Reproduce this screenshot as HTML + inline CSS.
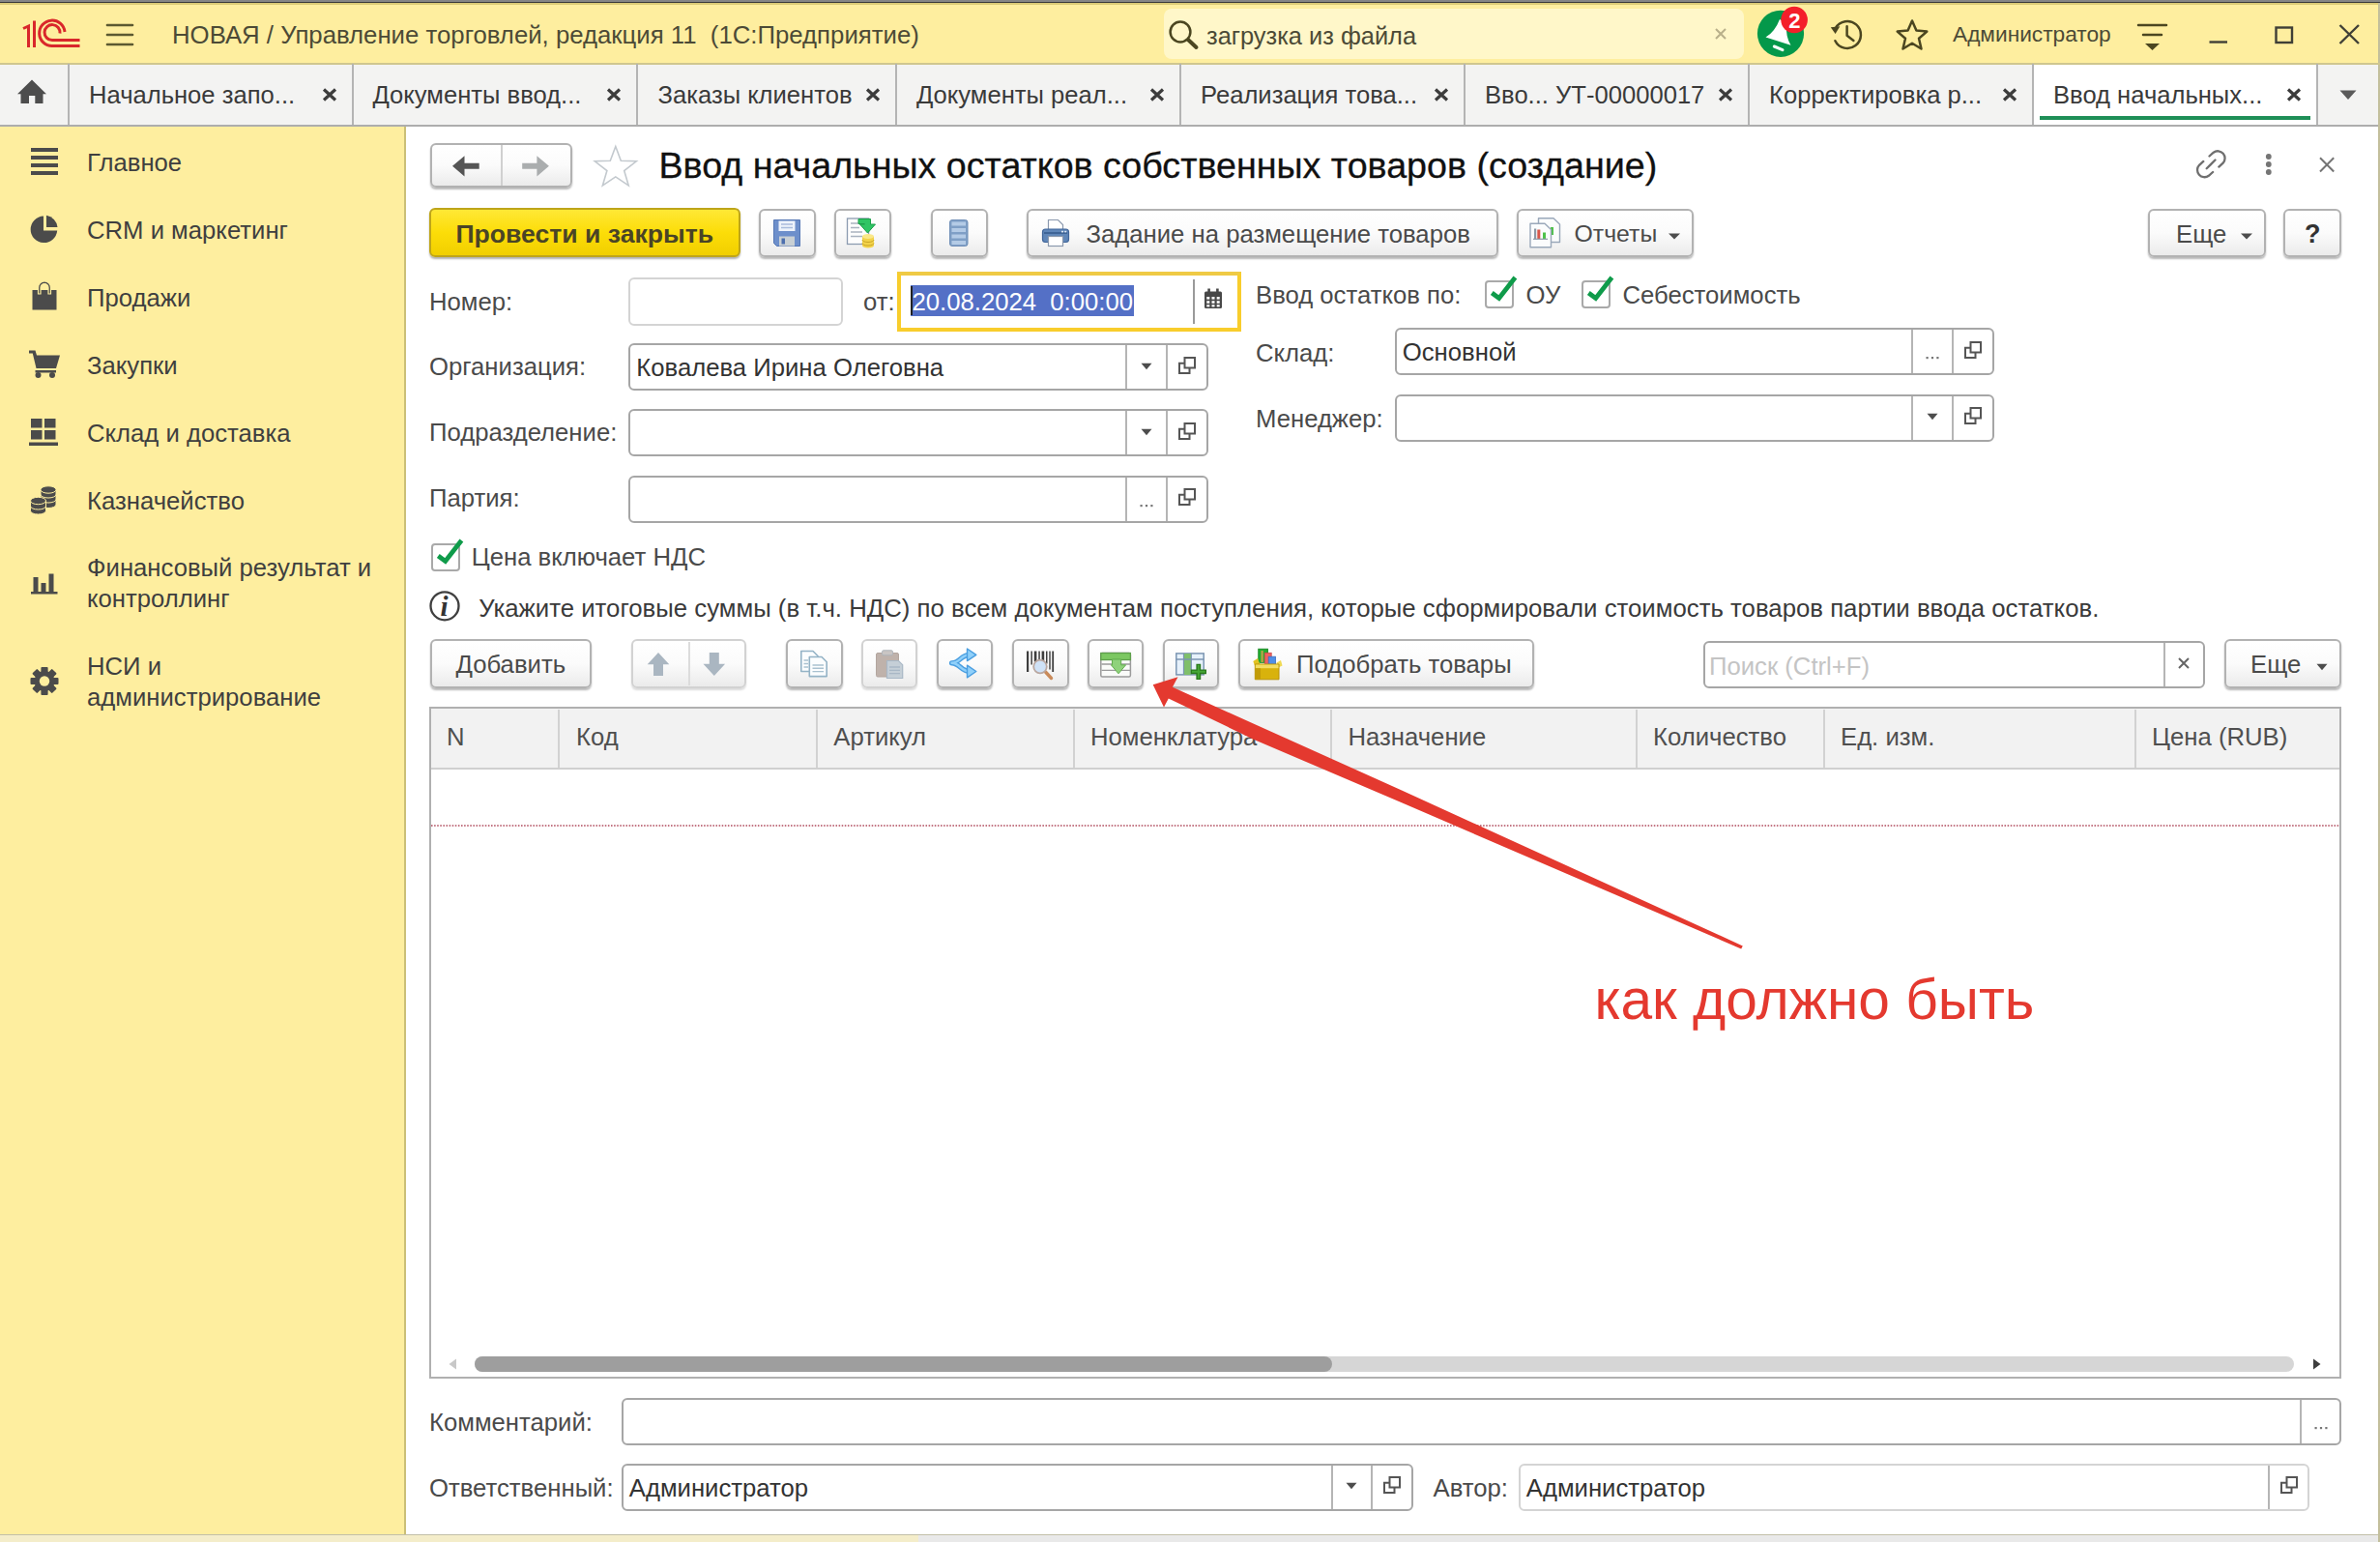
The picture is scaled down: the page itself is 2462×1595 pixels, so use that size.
<!DOCTYPE html>
<html lang="ru">
<head>
<meta charset="utf-8">
<title>Ввод начальных остатков собственных товаров (создание)</title>
<style>
*{box-sizing:border-box;margin:0;padding:0}
html,body{width:2462px;height:1595px;overflow:hidden;background:#fff}
body{position:relative;font-family:"Liberation Sans",Arial,sans-serif;font-size:25.7px;color:#3c3c3c;line-height:1}
.abs,.t,.btn,.fld,.cb{position:absolute}
.t{white-space:nowrap;line-height:30px;height:30px}
#topline{left:0;top:0;width:2462px;height:4.5px;background:linear-gradient(#858585 0 2.2px,#3a3a3a 2.2px 3.1px,#dccb77 3.1px 4.5px)}
#titlebar{left:0;top:3px;width:2462px;height:63px;background:#feee9f}
#tabbar{left:0;top:66px;width:2462px;height:65px;background:#f3f3f2;border-bottom:2px solid #adadad}
#sidebar{left:0;top:131px;width:420px;height:1456px;background:#feee9f;border-right:2px solid #cbbf76}
#rightedge{left:2460.2px;top:3px;width:2px;height:1592px;background:#c3bf9c}
#bottomstrip{left:0;top:1587px;width:2462px;height:8px;background:linear-gradient(90deg,#f4edca 0 950px,#e9e9e9 950px);border-top:1.6px solid #c2bfa8}
.tabsep{position:absolute;top:66px;width:2px;height:63px;background:#b4b4b4}
.tab{position:absolute;top:82px;line-height:32px;height:32px;white-space:nowrap;color:#3a3a3a;font-size:25.6px}
.tx{position:absolute;top:90px;width:16px;height:16px}
.btn{border:2px solid #b2b2b2;border-radius:6px;background:linear-gradient(#ffffff 0%,#fbfbfb 50%,#ebebeb 100%);box-shadow:0 2px 2px rgba(0,0,0,.28)}
.btn .t{color:#4a4a4a}
.fld{border:2px solid #a9a9a9;border-radius:6px;background:#fff}
.fld .sep{position:absolute;top:0;bottom:0;width:2px;background:#b5b5b5}
.cb{width:30px;height:29px;border:2px solid #a9a9a9;border-radius:4px;background:#fff}
.lbl{color:#4a4a4a}
.side{position:absolute;left:90px;color:#3f3f3f;line-height:32px;white-space:nowrap}

</style>
</head>
<body>
<div class="abs" id="titlebar"></div>
<div class="abs" id="topline"></div>
<div class="abs" id="tabbar"></div>
<div class="abs" id="sidebar"></div>
<div class="abs" id="bottomstrip"></div>
<div class="abs" id="rightedge"></div>
<!-- title bar -->
<svg class="abs" style="left:20px;top:16px" width="70" height="38" viewBox="20 16 70 38">
 <g fill="none" stroke="#d9272b" stroke-width="3">
  <path d="M24 29.5 L29.5 27 L29.5 49"/>
  <path d="M35.5 21.5 L35.5 49"/>
  <path d="M67 33 A13.2 13.2 0 1 0 54 47.5 L82.5 47.5"/>
  <path d="M62 34.5 A8 8 0 1 0 54 41.6 L82.5 41.6"/>
 </g>
</svg>
<svg class="abs" style="left:108px;top:22px" width="32" height="28" viewBox="0 0 32 28"><g stroke="#5c5930" stroke-width="2.7" stroke-linecap="round"><path d="M3 4H29M3 14H29M3 24H29"/></g></svg>
<div class="t" style="left:178px;top:20.8px;color:#4c4a36;font-size:25.75px;white-space:pre">НОВАЯ / Управление торговлей, редакция 11  (1С:Предприятие)</div>
<div class="abs" style="left:1204px;top:9px;width:600px;height:52px;border-radius:8px;background:#fff7c9"></div>
<svg class="abs" style="left:1206px;top:18px" width="36" height="36" viewBox="0 0 36 36"><circle cx="15" cy="15" r="10.4" fill="none" stroke="#4b4620" stroke-width="2.5"/><path d="M23.5 23.5L31.5 31" stroke="#4b4620" stroke-width="4" stroke-linecap="round"/></svg>
<div class="t" style="left:1248px;top:21.5px;color:#4c4a36;font-size:25.4px">загрузка из файла</div>
<svg class="abs" style="left:1773px;top:28px" width="14" height="14" viewBox="0 0 14 14"><path d="M2 2L12 12M12 2L2 12" stroke="#b9b08a" stroke-width="2"/></svg>
<!-- bell -->
<svg class="abs" style="left:1812px;top:4px" width="64" height="60" viewBox="1812 4 64 60">
 <circle cx="1842" cy="34.8" r="24.1" fill="#04984a"/>
 <path d="M1826.5 38.6 Q1836 33 1841 20 L1848 24 Q1847 38 1852.5 46.8 Z" fill="#fff"/>
 <path d="M1835.3 48 L1844 51.6" stroke="#fff" stroke-width="3" stroke-linecap="round"/>
 <circle cx="1856.1" cy="20.5" r="13.8" fill="#f41f2a"/>
 <text x="1856.3" y="29.3" font-family="Liberation Sans, Arial, sans-serif" font-size="22" font-weight="bold" fill="#fff" text-anchor="middle">2</text>
</svg>
<!-- history -->
<svg class="abs" style="left:1890px;top:16px" width="42" height="40" viewBox="1890 16 42 40">
 <g fill="none" stroke="#4b4620" stroke-width="2.5" stroke-linecap="round" stroke-linejoin="round">
  <path d="M1898.8 29 A14 14 0 1 1 1898.4 42.2"/>
  <path d="M1910.6 27.3 V36.8 L1917.4 42"/>
 </g>
 <path d="M1893.8 28.2 L1903.3 27.3 L1898.6 35 Z" fill="#4b4620"/>
</svg>
<!-- star -->
<svg class="abs" style="left:1958px;top:16px" width="40" height="40" viewBox="0 0 40 40"><path d="M20 5.5 L24.4 15.6 L35.3 16.6 L27 23.8 L29.5 34.5 L20 28.8 L10.5 34.5 L13 23.8 L4.7 16.6 L15.6 15.6 Z" fill="none" stroke="#4b4620" stroke-width="2.5" stroke-linejoin="round"/></svg>
<div class="t" style="left:2020px;top:19.6px;color:#4c4a36;font-size:22.7px">Администратор</div>
<!-- filter/menu -->
<svg class="abs" style="left:2208px;top:20px" width="36" height="36" viewBox="2208 20 36 36"><g stroke="#4b4620" stroke-width="2.5" stroke-linecap="round"><path d="M2212 26H2241M2217 36H2236"/></g><path d="M2219 45 H2234 L2226.5 52 Z" fill="#4b4620"/></svg>
<!-- window buttons -->
<svg class="abs" style="left:2280px;top:20px" width="170" height="32" viewBox="2280 20 170 32"><g fill="none" stroke="#3f3f36" stroke-width="2.4"><path d="M2285.5 43.5H2304"/><rect x="2354.5" y="28.5" width="16.5" height="15.5"/><path d="M2420.5 26L2440 45M2440 26L2420.5 45"/></g></svg>

<!-- khaki line --><div class="abs" style="left:0;top:65px;width:2462px;height:2px;background:#cfc68f"></div>

<div class="abs" style="left:2104px;top:67px;width:293px;height:62px;background:#fff"></div>
<div class="abs" style="left:2110px;top:120px;width:280px;height:4px;background:#1f8f57"></div>
<div class="tabsep" style="left:70px"></div>
<div class="tabsep" style="left:364px"></div>
<div class="tabsep" style="left:658px"></div>
<div class="tabsep" style="left:926px"></div>
<div class="tabsep" style="left:1220px"></div>
<div class="tabsep" style="left:1514px"></div>
<div class="tabsep" style="left:1808px"></div>
<div class="tabsep" style="left:2102px"></div>
<div class="tabsep" style="left:2396px"></div>
<svg class="abs" style="left:16px;top:80px" width="34" height="30" viewBox="16 80 34 30"><path d="M33 82.5 L48 97.2 H44.5 V107 H36.3 V99 H30 V107 H21.5 V97.2 H18 Z" fill="#4d4d4d"/></svg>
<div class="tab" style="left:92px">Начальное запо...</div>
<svg class="tx" style="left:333px" viewBox="0 0 16 16"><path d="M2 2.5L14 13.5M14 2.5L2 13.5" stroke="#3c3c3c" stroke-width="3.2"/></svg>
<div class="tab" style="left:385.5px">Документы ввод...</div>
<svg class="tx" style="left:627px" viewBox="0 0 16 16"><path d="M2 2.5L14 13.5M14 2.5L2 13.5" stroke="#3c3c3c" stroke-width="3.2"/></svg>
<div class="tab" style="left:680.5px">Заказы клиентов</div>
<svg class="tx" style="left:895px" viewBox="0 0 16 16"><path d="M2 2.5L14 13.5M14 2.5L2 13.5" stroke="#3c3c3c" stroke-width="3.2"/></svg>
<div class="tab" style="left:948px">Документы реал...</div>
<svg class="tx" style="left:1189px" viewBox="0 0 16 16"><path d="M2 2.5L14 13.5M14 2.5L2 13.5" stroke="#3c3c3c" stroke-width="3.2"/></svg>
<div class="tab" style="left:1242px">Реализация това...</div>
<svg class="tx" style="left:1483px" viewBox="0 0 16 16"><path d="M2 2.5L14 13.5M14 2.5L2 13.5" stroke="#3c3c3c" stroke-width="3.2"/></svg>
<div class="tab" style="left:1536px">Вво... УТ-00000017</div>
<svg class="tx" style="left:1777px" viewBox="0 0 16 16"><path d="M2 2.5L14 13.5M14 2.5L2 13.5" stroke="#3c3c3c" stroke-width="3.2"/></svg>
<div class="tab" style="left:1830px">Корректировка р...</div>
<svg class="tx" style="left:2071px" viewBox="0 0 16 16"><path d="M2 2.5L14 13.5M14 2.5L2 13.5" stroke="#3c3c3c" stroke-width="3.2"/></svg>
<div class="tab" style="left:2124px">Ввод начальных...</div>
<svg class="tx" style="left:2365px" viewBox="0 0 16 16"><path d="M2 2.5L14 13.5M14 2.5L2 13.5" stroke="#3c3c3c" stroke-width="3.2"/></svg>
<svg class="abs" style="left:2419px;top:92px" width="20" height="12" viewBox="0 0 20 12"><path d="M1.5 1.5H18.5L10 11Z" fill="#5a5a5a"/></svg>
<!-- sidebar -->
<svg class="abs" style="left:0;top:130px" width="100" height="620" viewBox="0 130 100 620">
 <g fill="#4b4b4b">
  <!-- main: 4 bars -->
  <rect x="32" y="153" width="28" height="4"/><rect x="32" y="161" width="28" height="4"/><rect x="32" y="169" width="28" height="4"/><rect x="32" y="177" width="28" height="4"/>
  <!-- crm pie -->
  <path d="M45 223.5 A13.8 13.8 0 1 0 59.2 238.5 H45 Z"/>
  <path d="M48 222.8 A13.8 13.8 0 0 1 59.5 235 H48 Z"/>
  <!-- sales bag -->
  <path d="M33.5 300 H58.5 V320.5 H33.5 Z"/>
  <path d="M39.5 304 V297.5 A6.5 6.5 0 0 1 52.5 297.5 V304 H50 V297.5 A4 4 0 0 0 42 297.5 V304 Z" fill="#4b4b4b" stroke="#feee9f" stroke-width="1.2"/>
  <!-- cart -->
  <path d="M30 362.5 H36.5 L38 367.5 H62 L58 381 H37.5 L33.8 365.5 H30 Z"/>
  <path d="M36.5 383 H58 V385.5 H36.5 Z"/>
  <circle cx="39.5" cy="388" r="3"/><circle cx="54" cy="388" r="3"/>
  <!-- warehouse -->
  <rect x="32" y="433" width="11.5" height="9.5"/><rect x="46" y="433" width="11.5" height="9.5"/>
  <rect x="32" y="445" width="11.5" height="9.5"/><rect x="46" y="445" width="11.5" height="9.5"/>
  <rect x="30" y="457.5" width="30" height="3.5"/>
  <!-- bars chart -->
  <rect x="34.5" y="597" width="5" height="15"/><rect x="42.5" y="603" width="5" height="9"/><rect x="50.5" y="593.5" width="5" height="18.5"/>
  <rect x="32" y="612" width="27.5" height="2.5"/>
 </g>
 <!-- coins -->
 <g fill="#4b4b4b" stroke="#feee9f" stroke-width="1">
  <path d="M42 506 V522 A8 3.5 0 0 0 58 522 V506 Z"/>
  <ellipse cx="50" cy="506.5" rx="8" ry="3.7"/>
  <path d="M42 511.5 A8 3.5 0 0 0 58 511.5 M42 516.5 A8 3.5 0 0 0 58 516.5" fill="none"/>
  <path d="M31.5 518 V528.5 A8 3.5 0 0 0 47.5 528.5 V518 Z"/>
  <ellipse cx="39.5" cy="518" rx="8" ry="3.7"/>
  <path d="M31.5 523.5 A8 3.5 0 0 0 47.5 523.5" fill="none"/>
 </g>
 <!-- gear -->
 <g transform="translate(46 704.5)">
  <g fill="#4b4b4b">
   <rect x="-3.6" y="-14.5" width="7.2" height="29" rx="1"/>
   <rect x="-3.6" y="-14.5" width="7.2" height="29" rx="1" transform="rotate(45)"/>
   <rect x="-3.6" y="-14.5" width="7.2" height="29" rx="1" transform="rotate(90)"/>
   <rect x="-3.6" y="-14.5" width="7.2" height="29" rx="1" transform="rotate(135)"/>
   <circle r="10.5"/>
  </g>
  <circle r="5.2" fill="#feee9f"/>
 </g>
</svg>
<div class="side" style="top:152px">Главное</div>
<div class="side" style="top:222px">CRM и маркетинг</div>
<div class="side" style="top:291.5px">Продажи</div>
<div class="side" style="top:362px">Закупки</div>
<div class="side" style="top:431.5px">Склад и доставка</div>
<div class="side" style="top:501.5px">Казначейство</div>
<div class="side" style="top:571px">Финансовый результат и<br>контроллинг</div>
<div class="side" style="top:673px">НСИ и<br>администрирование</div>

<!-- header: nav, star, title -->
<div class="btn" style="left:445px;top:148px;width:147px;height:46px"></div>
<div class="abs" style="left:518px;top:150px;width:2px;height:42px;background:#d0d0d0"></div>
<svg class="abs" style="left:464px;top:158px" width="110" height="28" viewBox="464 158 110 28">
 <path d="M468 171.8 L480.5 161.2 V168.8 H495.7 V174.8 H480.5 V182.4 Z" fill="#555"/>
 <path d="M567.9 171.8 L555.4 161.2 V168.8 H540.2 V174.8 H555.4 V182.4 Z" fill="#aaadae"/>
</svg>
<svg class="abs" style="left:610px;top:146px" width="54" height="50" viewBox="610 146 54 50"><path d="M636.8 151.5 L642.3 166.3 L658.3 166.8 L645.7 176.6 L650.2 191.8 L636.8 182.9 L623.4 191.8 L627.9 176.6 L615.3 166.8 L631.3 166.3 Z" fill="#fff" stroke="#c3c9ce" stroke-width="1.6" stroke-linejoin="miter"/></svg>
<div class="t" style="left:681.5px;top:149px;height:44px;line-height:44px;font-size:37.65px;color:#111;-webkit-text-stroke:0.3px #111">Ввод начальных остатков собственных товаров (создание)</div>
<!-- link, dots, close -->
<svg class="abs" style="left:2266px;top:150px" width="160" height="40" viewBox="2266 150 160 40">
 <g fill="none" stroke="#6f6f6f" stroke-width="2.3" stroke-linecap="round">
  <path d="M2285.5 161.5 L2289.8 157.7 A7.4 7.4 0 0 1 2299.6 168.7 L2295.3 172.6"/>
  <path d="M2279.3 166.9 L2275 170.8 A7.4 7.4 0 0 0 2284.8 181.8 L2289.1 178"/>
  <path d="M2282.7 174.3 L2291.5 165.5"/>
 </g>
 <g fill="#757575"><circle cx="2346.8" cy="162" r="2.9"/><circle cx="2346.8" cy="170" r="2.9"/><circle cx="2346.8" cy="178" r="2.9"/></g>
 <path d="M2400 163.3 L2414.2 177.5 M2414.2 163.3 L2400 177.5" stroke="#747474" stroke-width="2"/>
</svg>
<!-- command bar -->
<div class="abs" style="left:444px;top:215px;width:322px;height:51px;border:2px solid #bea51a;border-radius:6px;background:linear-gradient(#ffe836 0%,#fcdd08 50%,#f1cf00 100%);box-shadow:0 2px 2px rgba(0,0,0,.3)"></div>
<div class="t" style="left:471.5px;top:227px;font-weight:bold;font-size:26.6px;color:#4a4426">Провести и закрыть</div>
<div class="btn" style="left:785px;top:215.5px;width:59px;height:50px"></div>
<div class="btn" style="left:863px;top:215.5px;width:59px;height:50px"></div>
<div class="btn" style="left:963px;top:215.5px;width:59px;height:50px"></div>
<div class="btn" style="left:1062px;top:215.5px;width:488px;height:50px"><div class="t" style="left:59.5px;top:9.6px">Задание на размещение товаров</div></div>
<div class="btn" style="left:1569px;top:215.5px;width:183px;height:50px"><div class="t" style="left:57.5px;top:9.6px;font-size:24.8px">Отчеты</div></div>
<div class="btn" style="left:2222px;top:215.5px;width:122px;height:50px"><div class="t" style="left:27px;top:9.6px">Еще</div></div>
<div class="btn" style="left:2362px;top:215.5px;width:60px;height:50px"><div class="t" style="left:20px;top:9.6px;font-weight:bold;font-size:27px;color:#333">?</div></div>
<svg class="abs" style="left:1723.8px;top:238.2px" width="16" height="12" viewBox="0 0 16 12"><path d="M2 3.5H14L8 9.5Z" fill="#4d4d4d"/></svg>
<svg class="abs" style="left:2316px;top:238px" width="16" height="12" viewBox="0 0 16 12"><path d="M2 3.5H14L8 9.5Z" fill="#4d4d4d"/></svg>
<!-- save icon -->
<svg class="abs" style="left:798px;top:224px" width="34" height="34" viewBox="798 224 34 34">
 <path d="M800.5 227.5 H827.5 V254.5 H803.5 L800.5 251.5 Z" fill="#6d8fcb" stroke="#5577b5" stroke-width="1"/>
 <rect x="805.5" y="228.5" width="17" height="10.5" fill="#eef3fb"/>
 <path d="M808 232H820M808 235.5H820" stroke="#a9bbdc" stroke-width="1.3"/>
 <rect x="806" y="244.5" width="16" height="10" fill="#c9d0d4"/>
 <rect x="808.5" y="246.5" width="3.5" height="6" fill="#4d6fae"/>
</svg>
<!-- post (doc + green arrow + db) -->
<svg class="abs" style="left:872px;top:222px" width="40" height="38" viewBox="872 222 40 38">
 <rect x="876.5" y="226" width="22" height="26.5" fill="#fdfdfd" stroke="#8c9bb0" stroke-width="1.3"/>
 <path d="M880 231H889M880 235.5H889M880 240H892M880 244.5H892" stroke="#a9b2bf" stroke-width="1.5"/>
 <path d="M888 226.5 H900.5 V232 H905.5 L897.5 241 L889.5 232 H894.5 V231.5 H888 Z" fill="#2fc564" stroke="#1da04b" stroke-width="1"/>
 <path d="M892 244.5 V254 A6 2.5 0 0 0 904 254 V244.5 Z" fill="#f3d34a"/>
 <ellipse cx="898" cy="244.5" rx="6" ry="2.5" fill="#fae88a"/>
 <path d="M892 248 A6 2.5 0 0 0 904 248 M892 251.5 A6 2.5 0 0 0 904 251.5" fill="none" stroke="#c9a528" stroke-width="1"/>
</svg>
<!-- list icon -->
<svg class="abs" style="left:978px;top:224px" width="28" height="34" viewBox="978 224 28 34">
 <rect x="982.5" y="227.5" width="18.5" height="27" rx="2.5" fill="#7f9fc6" stroke="#7190b8" stroke-width="1"/>
 <g fill="#b4cbe6"><rect x="984.5" y="229.5" width="14.5" height="4"/><rect x="984.5" y="236" width="14.5" height="4"/><rect x="984.5" y="242.5" width="14.5" height="4"/><rect x="984.5" y="249" width="14.5" height="4"/></g>
</svg>
<!-- printer -->
<svg class="abs" style="left:1074px;top:224px" width="36" height="34" viewBox="1074 224 36 34">
 <path d="M1084.5 238 V227.5 H1094.5 L1099.5 232.5 V238 Z" fill="#fff" stroke="#8a98ad" stroke-width="1.2"/>
 <rect x="1078.5" y="237" width="27" height="13.5" rx="3" fill="#5f86b8" stroke="#41669a" stroke-width="1.2"/>
 <path d="M1080 241H1104" stroke="#355a8c" stroke-width="1.5"/>
 <rect x="1098" y="238.8" width="2" height="1.6" fill="#dfe8f4"/><rect x="1101.2" y="238.8" width="2" height="1.6" fill="#dfe8f4"/>
 <rect x="1084.5" y="244.5" width="15" height="10" fill="#fff" stroke="#8a98ad" stroke-width="1.2"/>
</svg>
<!-- reports icon -->
<svg class="abs" style="left:1578px;top:222px" width="40" height="38" viewBox="1578 222 40 38">
 <path d="M1591.5 225.8 H1607 L1613.5 232 V250.5 H1591.5 Z" fill="#fbfcfd" stroke="#9aa8ba" stroke-width="1.4" stroke-linejoin="round"/>
 <rect x="1604" y="235" width="3" height="8" fill="#4ec24a"/>
 <path d="M1583 231.3 H1598 L1604.5 237.5 V255.8 H1583 Z" fill="#fbfcfd" stroke="#9aa8ba" stroke-width="1.4" stroke-linejoin="round"/>
 <rect x="1587" y="236.5" width="2.2" height="10.5" fill="#8d99a6"/>
 <rect x="1590.3" y="237.5" width="3" height="9.5" fill="#d8574a"/>
 <rect x="1596" y="240.5" width="3" height="6.5" fill="#4ec24a"/>
 <path d="M1586 247.3H1601" stroke="#8d99a6" stroke-width="1.2"/>
</svg>

<div class="t lbl" style="left:444px;top:297.3px;">Номер:</div>
<div class="fld" style="left:650px;top:287.3px;width:221.5px;height:49.5px;border-color:#d4d4d4">
</div>
<div class="t lbl" style="left:893px;top:297.3px;">от:</div>
<div class="abs" style="left:928px;top:281px;width:356px;height:62px;border:4px solid #f8cd2c;border-top-color:#efca45;background:#fff"></div>
<div class="abs" style="left:942px;top:295px;width:230.5px;height:32px;background:#5470c6"></div>
<div class="abs" style="left:942px;top:296px;width:2px;height:30px;background:#222"></div>
<div class="t " style="left:943.5px;top:297.3px;color:#fff;white-space:pre">20.08.2024  0:00:00</div>
<div class="abs" style="left:1233.5px;top:289px;width:2px;height:46px;background:#9a9a9a"></div>
<svg class="abs" style="left:1244px;top:296px" width="22" height="26" viewBox="1244 296 22 26">
<rect x="1246" y="301.5" width="18" height="17.5" rx="1.5" fill="#484848"/>
<rect x="1249.3" y="298.5" width="2.6" height="5" fill="#484848"/><rect x="1258.1" y="298.5" width="2.6" height="5" fill="#484848"/>
<g fill="#fff"><rect x="1248.3" y="307" width="3" height="2.6"/><rect x="1253.5" y="307" width="3" height="2.6"/><rect x="1258.7" y="307" width="3" height="2.6"/>
<rect x="1248.3" y="311.2" width="3" height="2.6"/><rect x="1253.5" y="311.2" width="3" height="2.6"/><rect x="1258.7" y="311.2" width="3" height="2.6"/>
<rect x="1248.3" y="315.2" width="3" height="2.2"/><rect x="1253.5" y="315.2" width="3" height="2.2"/><rect x="1258.7" y="315.2" width="3" height="2.2"/></g></svg>
<div class="t lbl" style="left:444px;top:364.4px;">Организация:</div>
<div class="fld" style="left:650px;top:355px;width:600px;height:49.2px;border-color:#a6a6a6">
<div class="sep" style="left:512.4000000000001px"></div>
<div class="sep" style="left:554px"></div>
</div>
<div class="t " style="left:658.3px;top:365.2px;color:#333">Ковалева Ирина Олеговна</div>
<svg class="abs" style="left:1178.2px;top:372.5px" width="16" height="12" viewBox="0 0 16 12"><path d="M2.5 2.8H13.5L8 9.3Z" fill="#4d4d4d"/></svg>
<svg class="abs" style="left:1218.2px;top:367.5px" width="20" height="20" viewBox="-1 -1 20 20"><g fill="none" stroke="#555" stroke-width="2"><path d="M6.5 1 H17 V11.5 H6.5 Z"/><path d="M6 6.8 H1 V17 H11.5 V12"/></g></svg>
<div class="t lbl" style="left:444px;top:432.4px;">Подразделение:</div>
<div class="fld" style="left:650px;top:423px;width:600px;height:49.2px;border-color:#a6a6a6">
<div class="sep" style="left:512.4000000000001px"></div>
<div class="sep" style="left:554px"></div>
</div>
<svg class="abs" style="left:1178.2px;top:440.5px" width="16" height="12" viewBox="0 0 16 12"><path d="M2.5 2.8H13.5L8 9.3Z" fill="#4d4d4d"/></svg>
<svg class="abs" style="left:1218.2px;top:435.5px" width="20" height="20" viewBox="-1 -1 20 20"><g fill="none" stroke="#555" stroke-width="2"><path d="M6.5 1 H17 V11.5 H6.5 Z"/><path d="M6 6.8 H1 V17 H11.5 V12"/></g></svg>
<div class="t lbl" style="left:444px;top:500.4px;">Партия:</div>
<div class="fld" style="left:650px;top:491.5px;width:600px;height:49.2px;border-color:#a6a6a6">
<div class="sep" style="left:512.4000000000001px"></div>
<div class="sep" style="left:554px"></div>
</div>
<svg class="abs" style="left:1178.2px;top:520.5px" width="16" height="4" viewBox="0 0 16 4"><g fill="#777"><rect x="1.5" y="1" width="2.2" height="2.2"/><rect x="6.9" y="1" width="2.2" height="2.2"/><rect x="12.3" y="1" width="2.2" height="2.2"/></g></svg>
<svg class="abs" style="left:1218.2px;top:504.0px" width="20" height="20" viewBox="-1 -1 20 20"><g fill="none" stroke="#555" stroke-width="2"><path d="M6.5 1 H17 V11.5 H6.5 Z"/><path d="M6 6.8 H1 V17 H11.5 V12"/></g></svg>
<div class="t lbl" style="left:1299px;top:289.5px;">Ввод остатков по:</div>
<div class="cb" style="left:1536px;top:289.5px"></div><svg class="abs" style="left:1536px;top:280.8px" width="40" height="40" viewBox="0 0 40 40"><path d="M7.3 22 L14.7 27.4 L31.4 6" fill="none" stroke="#0f9b4a" stroke-width="4.8" stroke-linejoin="miter"/></svg>
<div class="t lbl" style="left:1578.5px;top:289.5px;">ОУ</div>
<div class="cb" style="left:1636px;top:289.5px"></div><svg class="abs" style="left:1636px;top:280.8px" width="40" height="40" viewBox="0 0 40 40"><path d="M7.3 22 L14.7 27.4 L31.4 6" fill="none" stroke="#0f9b4a" stroke-width="4.8" stroke-linejoin="miter"/></svg>
<div class="t lbl" style="left:1678.5px;top:289.5px;">Себестоимость</div>
<div class="t lbl" style="left:1299px;top:349.6px;">Склад:</div>
<div class="fld" style="left:1442.5px;top:339.2px;width:620px;height:49.2px;border-color:#a6a6a6">
<div class="sep" style="left:532.5px"></div>
<div class="sep" style="left:574.5px"></div>
</div>
<div class="t " style="left:1450.8px;top:349.4px;color:#333">Основной</div>
<svg class="abs" style="left:1991.0px;top:368.2px" width="16" height="4" viewBox="0 0 16 4"><g fill="#777"><rect x="1.5" y="1" width="2.2" height="2.2"/><rect x="6.9" y="1" width="2.2" height="2.2"/><rect x="12.3" y="1" width="2.2" height="2.2"/></g></svg>
<svg class="abs" style="left:2030.95px;top:351.7px" width="20" height="20" viewBox="-1 -1 20 20"><g fill="none" stroke="#555" stroke-width="2"><path d="M6.5 1 H17 V11.5 H6.5 Z"/><path d="M6 6.8 H1 V17 H11.5 V12"/></g></svg>
<div class="t lbl" style="left:1299px;top:418.0px;">Менеджер:</div>
<div class="fld" style="left:1442.5px;top:407.5px;width:620px;height:49.2px;border-color:#a6a6a6">
<div class="sep" style="left:532.5px"></div>
<div class="sep" style="left:574.5px"></div>
</div>
<svg class="abs" style="left:1991.0px;top:425.0px" width="16" height="12" viewBox="0 0 16 12"><path d="M2.5 2.8H13.5L8 9.3Z" fill="#4d4d4d"/></svg>
<svg class="abs" style="left:2030.95px;top:420.0px" width="20" height="20" viewBox="-1 -1 20 20"><g fill="none" stroke="#555" stroke-width="2"><path d="M6.5 1 H17 V11.5 H6.5 Z"/><path d="M6 6.8 H1 V17 H11.5 V12"/></g></svg>
<div class="cb" style="left:446px;top:561.5px"></div><svg class="abs" style="left:446px;top:552.8px" width="40" height="40" viewBox="0 0 40 40"><path d="M7.3 22 L14.7 27.4 L31.4 6" fill="none" stroke="#0f9b4a" stroke-width="4.8" stroke-linejoin="miter"/></svg>
<div class="t lbl" style="left:487.7px;top:561.0px;">Цена включает НДС</div>
<svg class="abs" style="left:442px;top:609px" width="36" height="36" viewBox="442 609 36 36"><circle cx="460" cy="626.8" r="14.5" fill="#fff" stroke="#3f3f3f" stroke-width="2.3"/>
<text x="459.6" y="636.6" font-family="Liberation Serif, serif" font-style="italic" font-weight="bold" font-size="29" text-anchor="middle" fill="#333">i</text></svg>
<div class="t " style="left:495.2px;top:613.6px;color:#3a3a3a;font-size:25.78px">Укажите итоговые суммы (в т.ч. НДС) по всем документам поступления, которые сформировали стоимость товаров партии ввода остатков.</div>
<div class="btn" style="left:444.5px;top:661.2px;width:167px;height:51.3px"><div class="t" style="left:25px;top:8.9px">Добавить</div></div>
<div class="btn" style="left:653px;top:661.2px;width:118.5px;height:51.3px;border-color:#d2d2d2;box-shadow:0 2px 2px rgba(0,0,0,.14)"></div>
<div class="abs" style="left:711.6px;top:664px;width:2px;height:45px;background:#dcdcdc"></div>
<svg class="abs" style="left:666px;top:670px" width="90" height="34" viewBox="666 670 90 34">
<path d="M681 675 L692.3 687.3 H686 V699 H676 V687.3 H669.7 Z" fill="#aab6c1"/>
<path d="M738.8 699 L750.1 686.7 H743.8 V675 H733.8 V686.7 H727.5 Z" fill="#aab6c1"/></svg>
<div class="btn" style="left:813px;top:661.2px;width:58.5px;height:51.3px"></div>
<div class="btn" style="left:890.5px;top:661.2px;width:58.5px;height:51.3px;border-color:#d2d2d2;box-shadow:0 2px 2px rgba(0,0,0,.14)"></div>
<div class="btn" style="left:968.5px;top:661.2px;width:58.5px;height:51.3px"></div>
<div class="btn" style="left:1047px;top:661.2px;width:58.5px;height:51.3px"></div>
<div class="btn" style="left:1124.5px;top:661.2px;width:58.5px;height:51.3px"></div>
<div class="btn" style="left:1202.5px;top:661.2px;width:58.5px;height:51.3px"></div>
<div class="btn" style="left:1280.5px;top:661.2px;width:306.5px;height:51.3px"><div class="t" style="left:58.5px;top:8.9px">Подобрать товары</div></div>
<svg class="abs" style="left:824px;top:668px" width="36" height="36" viewBox="824 668 36 36">
<g fill="#fbfdfe" stroke="#94b3c6" stroke-width="1.6" stroke-linejoin="round">
<path d="M828.8 673.5 H841 L846 678.5 V694.5 H828.8 Z"/>
<path d="M837.3 679.5 H850 L855.2 684.7 V699.6 H837.3 Z"/></g>
<g stroke="#a9c1d0" stroke-width="1.4"><path d="M831.5 683H836M831.5 686.5H836M831.5 690H836"/><path d="M840.5 688H852M840.5 691.3H852M840.5 694.6H852"/></g>
</svg>
<svg class="abs" style="left:902px;top:668px" width="36" height="38" viewBox="902 668 36 38">
<rect x="906.5" y="675.5" width="23" height="24.5" rx="1.5" fill="#bfb2ab" stroke="#b3a69f" stroke-width="1"/>
<rect x="912.5" y="672.8" width="11" height="5" rx="1.5" fill="#c9c5c3" stroke="#aeb4ba" stroke-width="1"/>
<path d="M917.5 683.5 H929.5 L933.7 687.7 V701.5 H917.5 Z" fill="#c5cfd7" stroke="#a9b8c6" stroke-width="1.2"/>
<path d="M920 690H931M920 693.3H931M920 696.6H931" stroke="#a9b8c6" stroke-width="1.3"/>
</svg>
<svg class="abs" style="left:978px;top:666px" width="38" height="40" viewBox="978 666 38 40">
<g fill="none" stroke="#4a9ee0" stroke-width="5.2" stroke-linejoin="round"><path d="M1003 677.3 C994 677.3 993 685.8 984.5 685.8 C993 685.8 994 694.5 1003 694.5"/></g>
<g fill="none" stroke="#8fd0fa" stroke-width="2.4" stroke-linejoin="round"><path d="M1003 677.3 C994 677.3 993 685.8 984.5 685.8 C993 685.8 994 694.5 1003 694.5"/></g>
<path d="M1000.5 671 L1009.8 677.3 L1000.5 683.6 Z" fill="#8fd0fa" stroke="#4a9ee0" stroke-width="1.4" stroke-linejoin="round"/>
<path d="M1000.5 688.2 L1009.8 694.5 L1000.5 700.8 Z" fill="#8fd0fa" stroke="#4a9ee0" stroke-width="1.4" stroke-linejoin="round"/>
</svg>
<svg class="abs" style="left:1058px;top:668px" width="38" height="38" viewBox="1058 668 38 38">
<g fill="#3e3e3e"><rect x="1062" y="673.5" width="2.2" height="21.5"/><rect x="1066.4" y="673.5" width="1.5" height="14"/><rect x="1069.8" y="673.5" width="2.6" height="11"/><rect x="1074.3" y="673.5" width="1.5" height="10"/><rect x="1077.6" y="673.5" width="2.6" height="11"/><rect x="1082" y="673.5" width="1.5" height="13"/><rect x="1085.3" y="673.5" width="1.4" height="19"/><rect x="1088.3" y="673.5" width="1.8" height="21.5"/></g>
<path d="M1081.5 695 L1087.5 701.5" stroke="#c98a5a" stroke-width="3.4" stroke-linecap="round"/>
<circle cx="1076" cy="689.5" r="6.8" fill="#cfe2f7" stroke="#b9a7a0" stroke-width="1.8"/>
</svg>
<svg class="abs" style="left:1134px;top:670px" width="40" height="36" viewBox="1134 670 40 36">
<rect x="1138.8" y="675.5" width="30.6" height="24.6" rx="1.5" fill="#fafbf9" stroke="#9b9b9b" stroke-width="1.5"/>
<path d="M1139.5 687H1169M1139.5 693.4H1169" stroke="#9b9b9b" stroke-width="1.4"/>
<rect x="1138.8" y="675.5" width="30.6" height="7" fill="#7cc862" stroke="#5e9f4b" stroke-width="1.3"/>
<path d="M1150.5 682 H1159.7 V687.8 H1164.6 L1157 696.8 L1149.4 687.8 H1150.5 Z" fill="#8fd27b" stroke="#63ad4e" stroke-width="1"/>
</svg>
<svg class="abs" style="left:1212px;top:670px" width="40" height="36" viewBox="1212 670 40 36">
<rect x="1216.8" y="675.9" width="28.4" height="22" fill="#e6f1fb" stroke="#7b95b2" stroke-width="1.5"/>
<rect x="1224.5" y="676" width="7.8" height="22" fill="#7fbf6a"/>
<path d="M1224.5 676V698M1232.3 676V698" stroke="#7b95b2" stroke-width="1.2"/>
<path d="M1216.8 682H1245.2" stroke="#7b95b2" stroke-width="1.5"/>
<path d="M1239.8 686.8 V703 M1231.8 694.8 H1248" stroke="#2a7a1c" stroke-width="4.8"/>
<path d="M1239.8 688 V701.8 M1233 694.8 H1246.8" stroke="#46a636" stroke-width="2"/>
</svg>
<svg class="abs" style="left:1292px;top:666px" width="38" height="40" viewBox="1292 666 38 40">
<rect x="1301.8" y="671.3" width="9.6" height="14" fill="#22b02e" stroke="#1d8a27" stroke-width="1"/>
<rect x="1304.5" y="673" width="2.2" height="12" fill="#bfa24a"/>
<rect x="1308.2" y="675.3" width="7" height="11" fill="#f0635f" stroke="#c9484a" stroke-width="0.8"/>
<rect x="1312.2" y="679.2" width="7.3" height="8" fill="#4f8fe6" stroke="#3a6fc0" stroke-width="0.8"/>
<path d="M1296.3 684 L1301 681 L1303.5 687.5 L1298.5 690 Z" fill="#e2c322"/>
<path d="M1320.5 685.5 L1325 683 L1326.5 688.5 L1322.5 690.5 Z" fill="#f0da55"/>
<path d="M1298.3 687 H1323 V702.8 H1298.3 Z" fill="#d8b20c" stroke="#b8930a" stroke-width="1"/>
<path d="M1298.8 687.5 H1322.5 V691.2 H1298.8 Z" fill="#f2dd63"/>
<path d="M1298.8 691.2 H1304 V702.3 H1298.8 Z" fill="#c29c08"/>
</svg>
<div class="fld" style="left:1762.3px;top:662.8px;width:519px;height:49.3px;border-color:#a6a6a6">
<div class="sep" style="left:473.5000000000002px"></div>
</div>
<div class="t " style="left:1768px;top:674.3px;color:#c4c4c4">Поиск (Ctrl+F)</div>
<svg class="abs" style="left:2252px;top:679px" width="14" height="14" viewBox="0 0 14 14"><path d="M2 2L12 12M12 2L2 12" stroke="#666" stroke-width="2"/></svg>
<div class="btn" style="left:2300.5px;top:661.2px;width:121.5px;height:51.3px"><div class="t" style="left:25.5px;top:8.9px">Еще</div></div>
<svg class="abs" style="left:2394px;top:684px" width="16" height="12" viewBox="0 0 16 12"><path d="M2.5 2.8H13.5L8 9.3Z" fill="#4d4d4d"/></svg>
<div class="abs" style="left:444px;top:731.3px;width:1978px;height:694.7px;border:2px solid #b0b0b0;background:#fff"></div>
<div class="abs" style="left:446px;top:733.3px;width:1974px;height:62.4px;background:#f2f2f2;border-bottom:2px solid #d0d0d0"></div>
<div class="abs" style="left:577.3px;top:734px;width:2px;height:59.5px;background:#d2d2d2"></div>
<div class="abs" style="left:843.6px;top:734px;width:2px;height:59.5px;background:#d2d2d2"></div>
<div class="abs" style="left:1109.5px;top:734px;width:2px;height:59.5px;background:#d2d2d2"></div>
<div class="abs" style="left:1376.4px;top:734px;width:2px;height:59.5px;background:#d2d2d2"></div>
<div class="abs" style="left:1691.9px;top:734px;width:2px;height:59.5px;background:#d2d2d2"></div>
<div class="abs" style="left:1885.8px;top:734px;width:2px;height:59.5px;background:#d2d2d2"></div>
<div class="abs" style="left:2207.5px;top:734px;width:2px;height:59.5px;background:#d2d2d2"></div>
<div class="t " style="left:462px;top:746.7px;color:#4f4f4f">N</div>
<div class="t " style="left:596px;top:746.7px;color:#4f4f4f">Код</div>
<div class="t " style="left:862.3px;top:746.7px;color:#4f4f4f">Артикул</div>
<div class="t " style="left:1128px;top:746.7px;color:#4f4f4f">Номенклатура</div>
<div class="t " style="left:1394.5px;top:746.7px;color:#4f4f4f">Назначение</div>
<div class="t " style="left:1710px;top:746.7px;color:#4f4f4f">Количество</div>
<div class="t " style="left:1904px;top:746.7px;color:#4f4f4f">Ед. изм.</div>
<div class="t " style="left:2226px;top:746.7px;color:#4f4f4f">Цена (RUB)</div>
<svg class="abs" style="left:446px;top:852px" width="1974" height="4" viewBox="0 0 1974 4"><path d="M0 1.9H1974" stroke="#b04a5c" stroke-width="1.5" stroke-dasharray="1.55 1.55"/></svg>
<div class="abs" style="left:491px;top:1403px;width:1882px;height:16px;border-radius:8px;background:#d6d6d6"></div>
<div class="abs" style="left:491px;top:1403px;width:886.5px;height:16px;border-radius:8px;background:#9e9e9e"></div>
<svg class="abs" style="left:462px;top:1403px" width="12" height="16" viewBox="0 0 12 16"><path d="M10 2.5V13.5L2.5 8Z" fill="#c8c8c8"/></svg>
<svg class="abs" style="left:2391px;top:1403px" width="12" height="16" viewBox="0 0 12 16"><path d="M2 2.5V13.5L9.5 8Z" fill="#3e3e3e"/></svg>
<div class="t lbl" style="left:444px;top:1456.0px;">Комментарий:</div>
<div class="fld" style="left:642.5px;top:1445.5px;width:1779.5px;height:49px;border-color:#a6a6a6">
<div class="sep" style="left:1734.0px"></div>
</div>
<svg class="abs" style="left:2392.75px;top:1474.5px" width="16" height="4" viewBox="0 0 16 4"><g fill="#777"><rect x="1.5" y="1" width="2.2" height="2.2"/><rect x="6.9" y="1" width="2.2" height="2.2"/><rect x="12.3" y="1" width="2.2" height="2.2"/></g></svg>
<div class="t lbl" style="left:444px;top:1524.3px;">Ответственный:</div>
<div class="fld" style="left:642.5px;top:1513.5px;width:819px;height:49px;border-color:#a6a6a6">
<div class="sep" style="left:732.0px"></div>
<div class="sep" style="left:773.5px"></div>
</div>
<div class="t " style="left:650.8px;top:1523.7px;color:#333">Администратор</div>
<svg class="abs" style="left:1390.25px;top:1531.0px" width="16" height="12" viewBox="0 0 16 12"><path d="M2.5 2.8H13.5L8 9.3Z" fill="#4d4d4d"/></svg>
<svg class="abs" style="left:1429.95px;top:1526.0px" width="20" height="20" viewBox="-1 -1 20 20"><g fill="none" stroke="#555" stroke-width="2"><path d="M6.5 1 H17 V11.5 H6.5 Z"/><path d="M6 6.8 H1 V17 H11.5 V12"/></g></svg>
<div class="t lbl" style="left:1482.5px;top:1524.3px;">Автор:</div>
<div class="fld" style="left:1570.5px;top:1513.5px;width:818.5px;height:49px;border-color:#d4d4d4">
<div class="sep" style="left:773.3000000000002px"></div>
</div>
<div class="t " style="left:1578.8px;top:1523.7px;color:#333">Администратор</div>
<svg class="abs" style="left:2357.6px;top:1526.0px" width="20" height="20" viewBox="-1 -1 20 20"><g fill="none" stroke="#555" stroke-width="2"><path d="M6.5 1 H17 V11.5 H6.5 Z"/><path d="M6 6.8 H1 V17 H11.5 V12"/></g></svg>
<svg class="abs" style="left:1180px;top:690px;pointer-events:none" width="640" height="300" viewBox="1180 690 640 300">
<path d="M1192.7 708.3 L1218.5 700.3 L1212.9 710.8 L1296 748.2 L1450 817.6 L1802.8 978.4 L1801.2 981.4 L1450 830.3 L1296 764.4 L1208.8 722.5 L1204 731.6 Z" fill="#e4392f"/></svg>
<div class="abs" style="left:1649.5px;top:998.5px;height:70px;line-height:70px;font-size:58.65px;color:#e4392f;white-space:nowrap">как должно быть</div>
</body>
</html>
